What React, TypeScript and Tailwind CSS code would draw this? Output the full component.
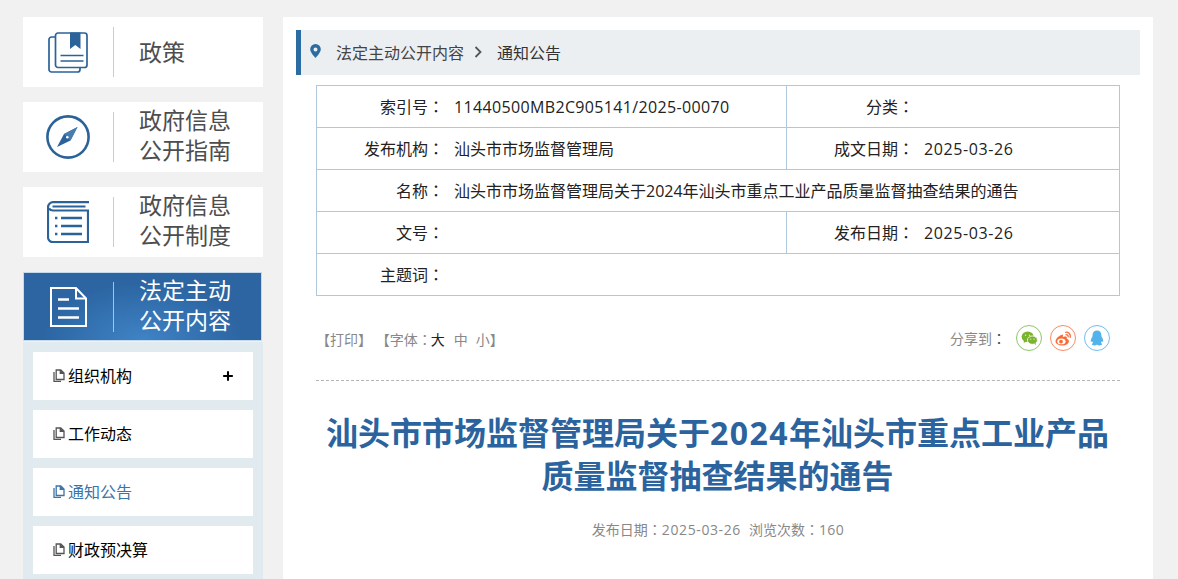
import { Plus } from "lucide-react";
import type { ReactNode } from "react";

const BookIcon = () => (
  <svg width="40" height="41" viewBox="0 0 40 41" fill="none" stroke="#2b6399" strokeWidth="1.700">
    <path d="M7 5H3.500a2.500 2.500 0 0 0-2.500 2.500v30a2.500 2.500 0 0 0 2.500 2.500h26a2.500 2.500 0 0 0 2.500-2.500V35" />
    <rect x="7.500" y="1" width="31.500" height="34.500" rx="2.500" />
    <path d="M22 0.500h10.500v16.500l-5.250-4-5.250 4z" fill="#2b6399" stroke="none" />
    <path d="M12.500 23.500h23M12.500 29h23" strokeWidth="1.600" />
  </svg>
);

const CompassIcon = () => (
  <svg width="44" height="44" viewBox="0 0 44 44" fill="none">
    <circle cx="22" cy="22" r="20.600" stroke="#2b6399" strokeWidth="2.600" />
    <path d="M31.500 12 24.500 25.500 11 32 18 19z" fill="#2b6399" />
    <path d="M31.500 12 18 19l6.500 6.500z" fill="#4a7dae" />
    <circle cx="21.300" cy="22.300" r="1.300" fill="#fff" />
  </svg>
);

const ListBookIcon = () => (
  <svg width="42" height="42" viewBox="0 0 42 42" fill="none" stroke="#2b6399">
    <path d="M42 1.200H6a5 5 0 0 0-5 5v30a5 5 0 0 0 5 5h35V9.500H6a5 5 0 0 1-4-2" strokeWidth="2.200" />
    <path d="M5.500 5.500h33" strokeWidth="2.200" />
    <path d="M14 17h21M14 25h21M14 33h21" strokeWidth="2.400" />
    <path d="M8 17h2.400M8 25h2.400M8 33h2.400" strokeWidth="2.400" />
  </svg>
);

const DocIcon = () => (
  <svg width="37" height="40" viewBox="0 0 37 40" fill="none" stroke="#fff" strokeWidth="2">
    <path d="M1 1h25l10 10.500V39H1z" />
    <path d="M26 1v10.500h10" />
    <path d="M8 12.500h11M8 21.500h21M8 30.500h21" strokeWidth="2.400" />
  </svg>
);

const FilesIcon = () => (
  <svg width="12" height="14" viewBox="0 0 12 14" fill="none" stroke="currentColor" strokeWidth="1.300" className="shrink-0">
    <path d="M1 3v9.300h7" />
    <path d="M3.200 1h4.600L11 4v6.500H3.200z" />
    <path d="M7.300 1v3.400H11" fill="currentColor" />
  </svg>
);

const PinIcon = () => (
  <svg width="11" height="14" viewBox="0 0 11 14" className="-mt-[3px]">
    <path
      fillRule="evenodd"
      d="M5.500 0A5.300 5.300 0 0 0 .2 5.300C.2 8.800 5.500 14 5.500 14s5.300-5.200 5.300-8.700A5.300 5.300 0 0 0 5.500 0zm0 3.400a2 2 0 1 1 0 4 2 2 0 0 1 0-4z"
      fill="#2b6ca3"
    />
  </svg>
);

const WechatIcon = () => (
  <svg width="17" height="15" viewBox="0 0 20 18">
    <ellipse cx="7.800" cy="7" rx="7.300" ry="6.300" fill="#7bb32e" />
    <path d="M3.500 11 3 14.500 7 12z" fill="#7bb32e" />
    <ellipse cx="13.500" cy="11" rx="6" ry="5" fill="#7bb32e" stroke="#fff" strokeWidth="1" />
    <path d="M16 15l1.500 2.500-.2-3.500z" fill="#7bb32e" />
    <circle cx="5.300" cy="5" r=".9" fill="#dcebc2" />
    <circle cx="10" cy="5" r=".9" fill="#dcebc2" />
    <circle cx="11.500" cy="9.800" r=".8" fill="#dcebc2" />
    <circle cx="15.500" cy="9.800" r=".8" fill="#dcebc2" />
  </svg>
);

const WeiboIcon = () => (
  <svg width="17" height="15" viewBox="0 0 20 18" fill="none">
    <path
      d="M8 4.500C4 6 .5 9.500.5 12.300c0 3 3.700 5.200 7.800 5.200 5 0 8.200-3 8.200-5.300 0-2-2-2.500-2.700-2.800.5-1.300.5-2.600-1.300-2.900-1.200-.2-2.800.5-3.300.7.400-1.500.2-3.800-1.200-2.700z"
      fill="#fb6a36"
    />
    <ellipse cx="7.500" cy="12.500" rx="5" ry="3.500" fill="#fff" />
    <circle cx="7" cy="12.700" r="2.300" fill="#fb6a36" />
    <path d="M12.500 1.500c3-.6 6.300 2 5.600 6M13 4.500c1.700-.3 3 1 2.600 2.600" stroke="#fb6a36" strokeWidth="1.500" strokeLinecap="round" />
  </svg>
);

const QQIcon = () => (
  <svg width="14" height="16" viewBox="0 0 18 20">
    <path
      d="M9 .5c-3.600 0-5.700 2.600-5.700 6 0 .8 0 1.500-.3 2-1 1.500-2 3.600-2 5.200 0 1.200.5 1.500 1.700.4.400 1 .9 1.800 1.500 2.400-1.200.5-1.800 1-1.800 1.600 0 1 1.800 1.400 3.500 1.400 1.200 0 2-.3 2.600-.8h1c.6.500 1.400.8 2.600.8 1.700 0 3.500-.4 3.500-1.400 0-.6-.6-1.100-1.800-1.600.6-.6 1.100-1.400 1.500-2.400 1.200 1.100 1.700.8 1.700-.4 0-1.600-1-3.700-2-5.200-.3-.5-.3-1.200-.3-2 0-3.400-2.100-6-5.700-6z"
      fill="#52b4ea"
    />
  </svg>
);

// the reference uses a full-width colon centred in its box, only the TC cut does that
const Colon = () => <span className="font-['Noto_Sans_CJK_TC',sans-serif]">：</span>;

const SideItem = ({ icon, lines, active }: { icon: ReactNode; lines: string[]; active?: boolean }) => (
  <div
    className={
      active
        ? "shrink-0 flex items-center w-[239px] h-[69px] mb-px border border-[#c5d9ec] bg-[radial-gradient(ellipse_at_50%_100%,#3f83c6_0%,#2c65a2_60%)]"
        : "shrink-0 flex items-center h-[70px] bg-white"
    }
  >
    <div className={active ? "w-[89px] flex items-center justify-center" : "w-[90px] flex items-center justify-center"}>{icon}</div>
    <div className={active ? "w-px h-[50px] bg-[#a9c3dc]" : "w-px h-[50px] bg-[#cccccc]"} />
    <div
      className={
        active
          ? "ml-[25px] -mt-[3px] text-[23px] leading-[30px] text-white"
          : lines.length > 1
            ? "ml-[25px] -mt-[4px] text-[23px] leading-[30px] text-[#4d4d4d]"
            : "ml-[25px] text-[23px] leading-[30px] text-[#4d4d4d]"
      }
    >
      {lines.map((l) => (
        <div key={l} className="h-[30px]">
          {l}
        </div>
      ))}
    </div>
  </div>
);

const SubItem = ({ text, active, plus }: { text: string; active?: boolean; plus?: boolean }) => (
  <div className="shrink-0 flex items-center h-12 bg-white pl-5 pr-[18px]">
    <span className={active ? "text-[#3b74a8]" : "text-[#555555]"}>
      <FilesIcon />
    </span>
    <span className={active ? "ml-[3px] text-[16px] text-[#3b74a8]" : "ml-[3px] text-[16px] text-black"}>{text}</span>
    {plus && <Plus className="ml-auto w-[14px] h-[14px] text-black" strokeWidth={3.5} />}
  </div>
);

const Label = ({ children }: { children: ReactNode }) => (
  <div className="w-[127px] shrink-0 text-right text-[16px] text-[#222222]">
    {children}
    <Colon />
  </div>
);

const Row = ({ children, last }: { children: ReactNode; last?: boolean }) => (
  <div className={last ? "flex items-center h-[41px]" : "flex items-center h-[42px] border-b border-[#b0c8de]"}>{children}</div>
);

const TwoCol = ({ a, b, c, d }: { a: string; b: ReactNode; c: string; d: string }) => (
  <>
    <Label>{a}</Label>
    <div className="ml-[10px] w-[332px] shrink-0 text-[16px] text-[#222222]">{b}</div>
    <div className="self-stretch w-px bg-[#b0c8de]" />
    <Label>{c}</Label>
    <div className="ml-[10px] text-[16px] tracking-[0.6px] text-[#222222]">{d}</div>
  </>
);

export default function App() {
  return (
    <div className="h-screen overflow-hidden bg-[#f1f1f1] pt-[17px] pl-[23px] flex gap-5 font-['Open_Sans','Noto_Sans_CJK_SC',sans-serif]">
      <aside className="w-[240px] shrink-0 flex flex-col gap-[15px]">
        <SideItem icon={<BookIcon />} lines={["政策"]} />
        <SideItem icon={<CompassIcon />} lines={["政府信息", "公开指南"]} />
        <SideItem icon={<ListBookIcon />} lines={["政府信息", "公开制度"]} />
        <div className="shrink-0">
          <SideItem active icon={<DocIcon />} lines={["法定主动", "公开内容"]} />
          <div className="bg-[#e0eaef] p-[10px] flex flex-col gap-[10px]">
            <SubItem text="组织机构" plus />
            <SubItem text="工作动态" />
            <SubItem text="通知公告" active />
            <SubItem text="财政预决算" />
          </div>
        </div>
      </aside>

      <main className="w-[870px] shrink-0 bg-white pt-[13px] px-[13px]">
        <div className="flex items-center h-[45px] bg-[#eceff2] border-l-[5px] border-[#2b6ca3] pl-[9px] text-[16px]">
          <PinIcon />
          <span className="ml-[15px] pt-px text-[#444444]">法定主动公开内容</span>
          <svg width="8" height="12" viewBox="0 0 8 12" fill="none" stroke="#555555" strokeWidth="1.800" className="ml-[10px] -mt-px">
            <path d="M1.500 1 6.500 6l-5 5" />
          </svg>
          <span className="ml-[15px] pt-px text-[#333333]">通知公告</span>
        </div>

        <div className="mx-5 mt-[10px] w-[804px] border border-[#b0c8de]">
          <Row>
            <TwoCol
              a="索引号"
              b={<span className="tracking-[0.35px]">11440500MB2C905141/2025-00070</span>}
              c="分类"
              d=""
            />
          </Row>
          <Row>
            <TwoCol a="发布机构" b="汕头市市场监督管理局" c="成文日期" d="2025-03-26" />
          </Row>
          <Row>
            <Label>名称</Label>
            <div className="ml-[10px] text-[16px] text-[#222222]">
              汕头市市场监督管理局关于2024年汕头市重点工业产品质量监督抽查结果的通告
            </div>
          </Row>
          <Row>
            <TwoCol a="文号" b="" c="发布日期" d="2025-03-26" />
          </Row>
          <Row last>
            <Label>主题词</Label>
          </Row>
        </div>

        <div className="mx-5 mt-[20px] h-[65px] pb-[20px] border-b border-dashed border-[#b4b4b4] flex items-center justify-between">
          <div className="text-[14px] text-[#888888] pt-[3px]">
            【打印】 【字体
            <Colon />
            <span className="-ml-px text-[#222222]">大</span>
            <span className="ml-[9px]">中</span>
            <span className="ml-2">小</span>】
          </div>
          <div className="flex items-center pr-[10px]">
            <span className="text-[14px] text-[#888888] mr-[10px]">
              分享到
              <span className="text-[#444444]">
                <Colon />
              </span>
            </span>
            <span className="w-[26px] h-[26px] rounded-full border border-[#8cc866] flex items-center justify-center">
              <WechatIcon />
            </span>
            <span className="ml-[8px] w-[26px] h-[26px] rounded-full border border-[#fb8a62] flex items-center justify-center">
              <WeiboIcon />
            </span>
            <span className="ml-[8px] w-[26px] h-[26px] rounded-full border border-[#71bdec] flex items-center justify-center">
              <QQIcon />
            </span>
          </div>
        </div>

        <h1 className="mt-[30px] -ml-px text-center text-[32px] leading-[43px] font-bold text-[#2b639e]">
          汕头市市场监督管理局关于<span className="tracking-[1.5px]">2024</span>年汕头市重点工业产品
          <br />
          质量监督抽查结果的通告
        </h1>
        <div className="mt-[22px] text-center text-[14px] text-[#888888]">
          发布日期
          <Colon />
          <span className="tracking-[0.6px]">2025-03-26</span>
          <span className="ml-2">浏览次数</span>
          <Colon />
          <span className="tracking-[0.4px]">160</span>
        </div>
      </main>
    </div>
  );
}
